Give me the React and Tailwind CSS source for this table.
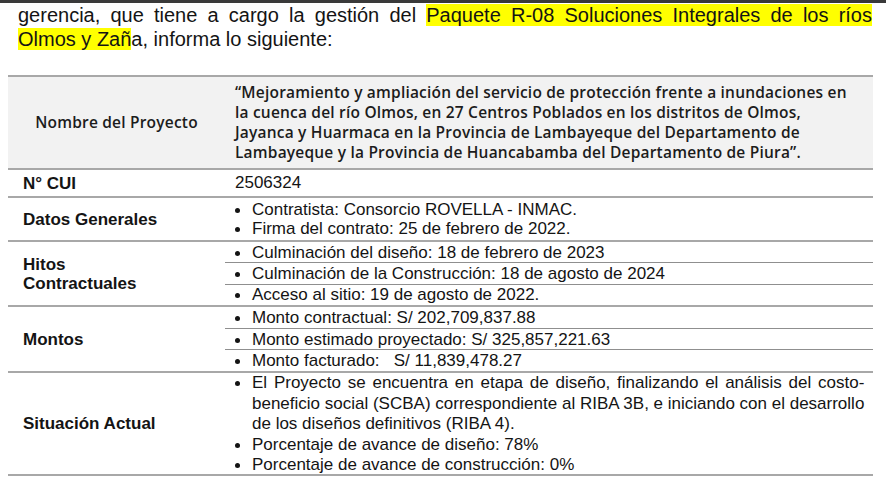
const arial = { fontFamily: '"Liberation Sans", Arial, sans-serif' };

const Bullet = ({ children }) => (
    <div className="flex">
        <span className="w-[27px] shrink-0 pl-[10px] pt-[8px]">
            <span className="block w-[5px] h-[5px] rounded-full bg-[#141414]" />
        </span>
        <span className="flex-1">{children}</span>
    </div>
);

const Label = ({ children }) => (
    <div className="w-[217px] shrink-0 flex items-center pl-[15px] font-bold text-[17px] leading-[19px]">
        {children}
    </div>
);

const SubRow = ({ children, first }) => (
    <div className={`flex-1 flex items-center ${first ? "" : "border-t border-[#8f8f8f]"}`}>
        <div className="w-full">
            <Bullet>{children}</Bullet>
        </div>
    </div>
);

const projectLines = [
    "“Mejoramiento y ampliación del servicio de protección frente a inundaciones en",
    "la cuenca del río Olmos, en 27 Centros Poblados en los distritos de Olmos,",
    "Jayanca y Huarmaca en la Provincia de Lambayeque del Departamento de",
    "Lambayeque y la Provincia de Huancabamba del Departamento de Piura”.",
];

export default function App() {
    return (
        <div className="relative w-[886px] h-[485px] overflow-hidden bg-white text-[#141414]" style={arial}>
            {/* barra superior */}
            <div className="absolute top-0 left-0 w-full h-[3px] bg-[#3a3a3a] z-10" />

            {/* parrafo */}
            <div className="pt-[3px] pl-[18px] pr-[14px] text-[20px] leading-[24px]">
                <div className="text-justify [text-align-last:justify]">
                    gerencia, que tiene a cargo la gestión del{" "}
                    <span className="bg-[#ffff00]">Paquete R-08 Soluciones Integrales de los ríos</span>
                </div>
                <div>
                    <span className="bg-[#ffff00]">Olmos y Zañ</span>a, informa lo siguiente:
                </div>
            </div>

            {/* tabla */}
            <div className="mt-[24px] ml-[8px] w-[865px] border-t-2 border-[#a8a8a8]">
                {/* Nombre del Proyecto */}
                <div className="flex h-[93px] bg-[#f2f2f2] border-b-2 border-[#a8a8a8] text-[#1c1c1c]" style={{ fontFamily: '"Open Sans", "Noto Sans", sans-serif' }}>
                    <div className="w-[217px] shrink-0 flex items-center justify-center font-semibold text-[15.5px] tracking-[0.2px]">
                        Nombre del Proyecto
                    </div>
                    <div className="flex-1 pl-[10px] pt-[5px] font-semibold text-[15.5px] tracking-[0.2px] leading-[20px]">
                        {projectLines.map((l, i) => (
                            <div key={i} className="whitespace-nowrap">{l}</div>
                        ))}
                    </div>
                </div>

                {/* N° CUI */}
                <div className="flex h-[28px] border-b-2 border-[#a8a8a8] text-[17px]">
                    <Label>N° CUI</Label>
                    <div className="flex-1 flex items-center pl-[10px]">2506324</div>
                </div>

                {/* Datos Generales */}
                <div className="flex h-[44px] border-b-2 border-[#a8a8a8] text-[17px] leading-[19px]">
                    <Label>Datos Generales</Label>
                    <div className="flex-1 flex flex-col justify-center">
                        <Bullet>Contratista: Consorcio ROVELLA - INMAC.</Bullet>
                        <Bullet>Firma del contrato: 25 de febrero de 2022.</Bullet>
                    </div>
                </div>

                {/* Hitos */}
                <div className="flex h-[65px] border-b-2 border-[#a8a8a8] text-[17px] leading-[19px]">
                    <Label>Hitos<br />Contractuales</Label>
                    <div className="flex-1 flex flex-col">
                        <SubRow first>Culminación del diseño: 18 de febrero de 2023</SubRow>
                        <SubRow>Culminación de la Construcción: 18 de agosto de 2024</SubRow>
                        <SubRow>Acceso al sitio: 19 de agosto de 2022.</SubRow>
                    </div>
                </div>

                {/* Montos */}
                <div className="flex h-[66px] border-b-2 border-[#a8a8a8] text-[17px] leading-[19px]">
                    <Label>Montos</Label>
                    <div className="flex-1 flex flex-col">
                        <SubRow first>Monto contractual: S/ 202,709,837.88</SubRow>
                        <SubRow>Monto estimado proyectado: S/ 325,857,221.63</SubRow>
                        <SubRow>Monto facturado:&nbsp;&nbsp; S/ 11,839,478.27</SubRow>
                    </div>
                </div>

                {/* Situacion Actual */}
                <div className="flex h-[103px] border-b-2 border-[#a8a8a8] text-[17px] leading-[20.6px]">
                    <Label>Situación Actual</Label>
                    <div className="flex-1 pr-[23px]">
                        <Bullet>
                            <span className="block whitespace-nowrap text-justify [text-align-last:justify]">El Proyecto se encuentra en etapa de diseño, finalizando el análisis del costo-</span>
                            <span className="block whitespace-nowrap text-justify [text-align-last:justify]">beneficio social (SCBA) correspondiente al RIBA 3B, e iniciando con el desarrollo</span>
                            <span className="block">de los diseños definitivos (RIBA 4).</span>
                        </Bullet>
                        <Bullet>Porcentaje de avance de diseño: 78%</Bullet>
                        <Bullet>Porcentaje de avance de construcción: 0%</Bullet>
                    </div>
                </div>
            </div>
        </div>
    );
}
